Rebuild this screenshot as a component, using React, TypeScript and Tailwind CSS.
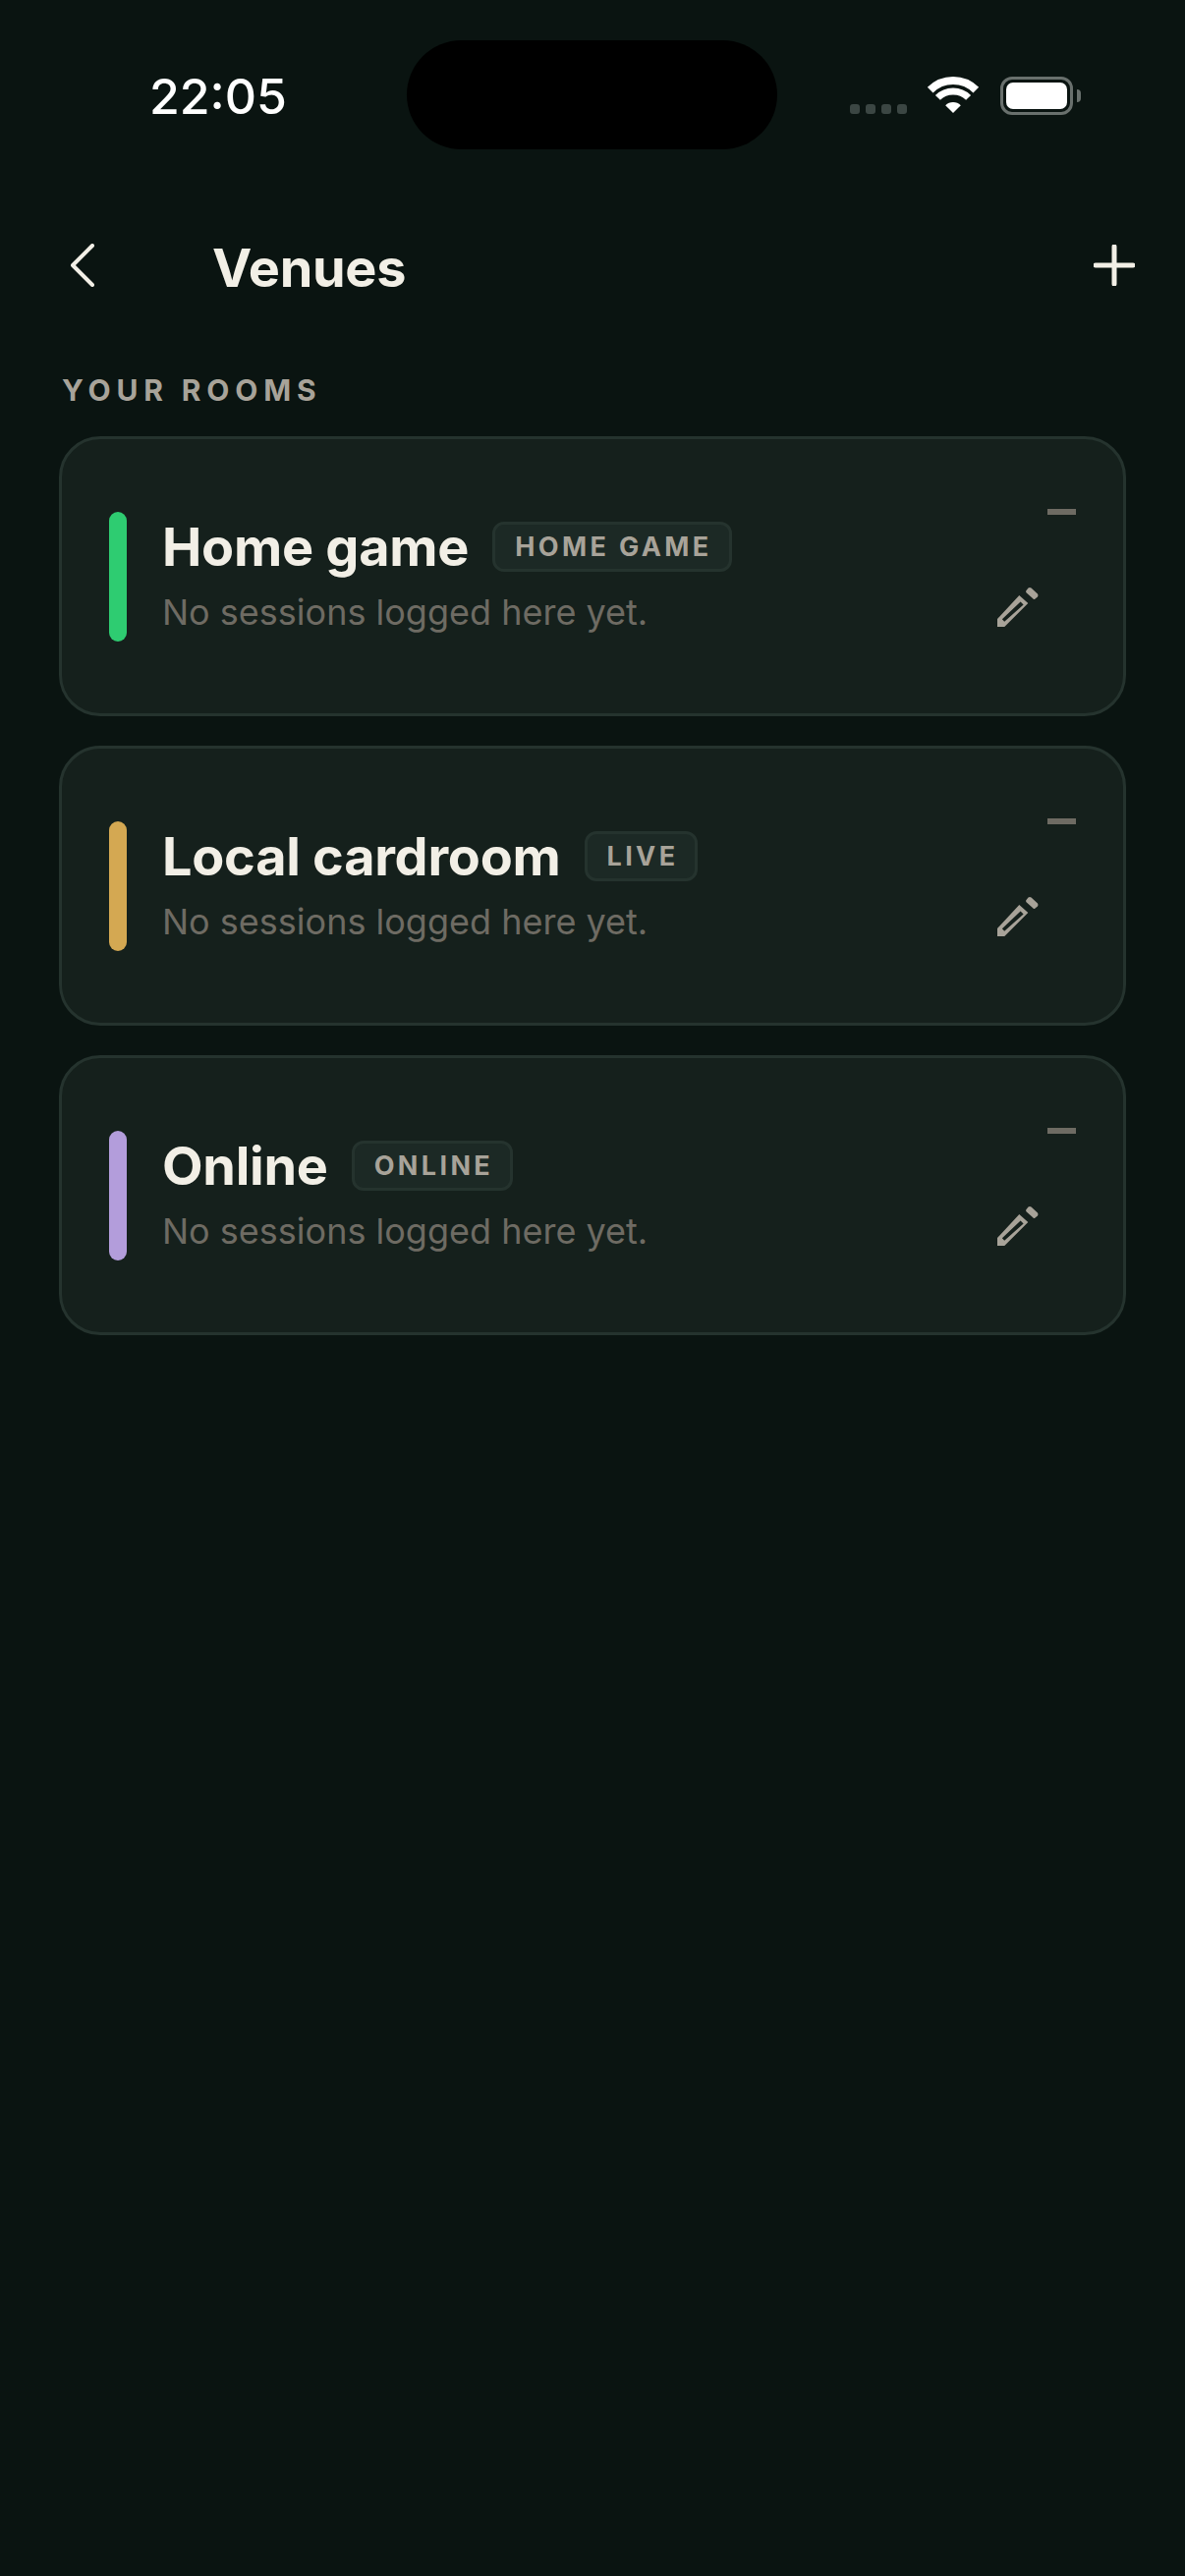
const venues = [
  { name: "Home game", tag: "HOME GAME", bar: "bg-[#2ecc71]" },
  { name: "Local cardroom", tag: "LIVE", bar: "bg-[#d4a852]" },
  { name: "Online", tag: "ONLINE", bar: "bg-[#b39ddb]" },
];

const StatusBar = () => (
  <div className="relative h-[152px] w-full">
    <div className="absolute left-[414px] top-[41px] h-[111px] w-[377px] rounded-full bg-black" />
    <div className="flex h-full items-start pl-[152px] pr-[106px] pt-[69px]">
      <span className="text-[50px] font-medium leading-[58px] text-white">22:05</span>
      <div className="ml-auto mt-[9px] flex items-start">
        <div className="mt-[28px] flex gap-[6px]">
          {[0, 1, 2, 3].map((i) => (
            <div key={i} className="h-[10px] w-[10px] rounded-[3px] bg-[#3b4643]" />
          ))}
        </div>
        <svg className="ml-[22px] overflow-visible" width="50" height="37" viewBox="0 0 50 37" fill="none">
          <path d="M1.7 13.7A33 33 0 0 1 48.3 13.7" stroke="#fff" strokeWidth="8" />
          <path d="M9.4 21.4A22 22 0 0 1 40.6 21.4" stroke="#fff" strokeWidth="7" />
          <path d="M25 37L17.2 29.2A11 11 0 0 1 32.8 29.2Z" fill="#fff" />
        </svg>
        <div className="ml-[23px] flex items-center">
          <div className="h-[39px] w-[74px] rounded-[12px] border-[3px] border-[#69706d] p-[3px]">
            <div className="h-full w-full rounded-[7px] bg-white" />
          </div>
          <div className="ml-[4px] h-[13px] w-[4px] rounded-r-full bg-[#69706d]" />
        </div>
      </div>
    </div>
  </div>
);

const Header = () => (
  <div className="mt-[88px] flex items-start pl-[72px] pr-[51px]">
    <svg className="mt-[8px]" width="24" height="44" viewBox="0 0 24 44" fill="none">
      <path d="M22 2L2 22L22 42" stroke="#f2efe6" strokeWidth="4" strokeLinecap="round" strokeLinejoin="round" />
    </svg>
    <h1 className="ml-[120px] text-[54px] font-bold leading-[66px] tracking-[-0.005em] text-[#f2efe6]">Venues</h1>
    <svg className="ml-auto mt-[9px]" width="42" height="42" viewBox="0 0 42 42" fill="none">
      <path d="M21 2V40M2 21H40" stroke="#f2efe6" strokeWidth="5" strokeLinecap="round" />
    </svg>
  </div>
);

const Pencil = () => (
  <svg width="42" height="42" viewBox="0 0 42 42" fill="none">
    <path d="M31.5 1.5Q33 0.5 34.5 1.5L41 7.5Q42 9 41 10.5L38.5 12.5Q37.5 13.5 36.5 12.5L29.5 6.2Q28.5 5 29.5 4Z" fill="#a8a399" />
    <path fillRule="evenodd" d="M22.3 9L31.3 17L7.3 41H0V33ZM23.6 15.6L4.9 33.2L7.2 35.8L26.6 18.4Z" fill="#a8a399" />
  </svg>
);

const VenueCard = ({ name, tag, bar }: { name: string; tag: string; bar: string }) => (
  <div className="flex h-[285px] items-center rounded-[42px] border-[3px] border-[#25332e] bg-[#15201c] pl-[48px] pr-[48px]">
    <div className={`h-[132px] w-[18px] rounded-full ${bar}`} />
    <div className="mb-[4px] ml-[36px] flex flex-col">
      <div className="flex items-center">
        <span className="text-[54px] font-bold leading-[66px] tracking-[-0.005em] text-[#f2efe6]">{name}</span>
        <span className="ml-[24px] flex h-[51px] items-center rounded-[12px] border-[3px] border-[#25332e] bg-[#1c2925] pl-[20px] pr-[17px] pt-[2px] text-[27px] font-bold tracking-[0.125em] text-[#a8a399]">
          {tag}
        </span>
      </div>
      <p className="mt-[10px] text-[36px] leading-[46px] text-[#6e6b63]">No sessions logged here yet.</p>
    </div>
    <div className="ml-auto flex flex-col items-end pb-[17px]">
      <div className="h-[6px] w-[29px] bg-[#6e6b63]" />
      <div className="mr-[38px] mt-[73px]">
        <Pencil />
      </div>
    </div>
  </div>
);

export default function App() {
  return (
    <div className="min-h-[2622px] w-full bg-[#0a1411] font-[Inter,sans-serif]">
      <StatusBar />
      <Header />
      <div className="px-[60px]">
        <p className="ml-[3px] mt-[73px] text-[30px] font-bold leading-[36px] tracking-[0.195em] text-[#a8a399]">
          YOUR ROOMS
        </p>
        <div className="mt-[29px] flex flex-col gap-[30px]">
          {venues.map((v) => (
            <VenueCard key={v.name} {...v} />
          ))}
        </div>
      </div>
    </div>
  );
}
